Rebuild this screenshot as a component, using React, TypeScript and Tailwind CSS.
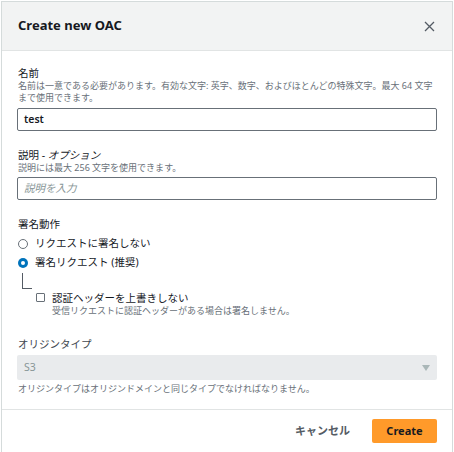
const font = { fontFamily: '"Noto Sans", "Noto Sans CJK JP", sans-serif' };

function Field({ label, desc, children }: { label: React.ReactNode; desc?: string; children: React.ReactNode }) {
  return (
    <div>
      <div className="text-[10.5px] leading-[14px] text-[#16191f] pl-[1px]">{label}</div>
      {desc && <div className="text-[9px] leading-[12px] text-[#687078] pl-[1px]">{desc}</div>}
      {children}
    </div>
  );
}

export default function App() {
  return (
    <div className="w-[454px] h-[452px] bg-white overflow-hidden pt-[1px] pl-[1px]" style={font}>
      <div className="w-[452px] h-[460px] border border-[#d5dbdb] border-b-0 flex flex-col">
        <div className="h-[49px] bg-[#f2f3f3] border-b border-[#e1e4e4] flex items-center justify-between pl-[16px] pr-[17px]">
          <span className="text-[13px] font-bold text-[#16191f]">Create new OAC</span>
          <svg width="11" height="11" viewBox="0 0 11 11" className="text-[#545b64]">
            <path d="M1 1L10 10M10 1L1 10" stroke="currentColor" strokeWidth="1.3" />
          </svg>
        </div>

        <div className="px-[15px] pt-[15px] pb-[14px] border-b border-[#e1e4e4]">
          <Field label="名前" desc="名前は一意である必要があります。有効な文字: 英字、数字、およびほとんどの特殊文字。最大 64 文字まで使用できます。">
            <div className="mt-[4px] h-[23px] border border-[#687078] rounded-[2px] flex items-center px-[6px] text-[10.5px] font-semibold text-[#16191f]">
              test
            </div>
          </Field>

          <div className="mt-[17px]">
            <Field label={<>説明 - <i>オプション</i></>} desc="説明には最大 256 文字を使用できます。">
              <div className="mt-[3px] h-[23px] border border-[#687078] rounded-[2px] flex items-center px-[6px] text-[10.5px] italic text-[#879596]">
                説明を入力
              </div>
            </Field>
          </div>

          <div className="mt-[17px]">
            <div className="text-[10.5px] leading-[14px] text-[#16191f] pl-[1px]">署名動作</div>
            <div className="mt-[6px] flex items-center gap-[7px] h-[14px] pl-[1px]">
              <span className="w-[10px] h-[10px] rounded-full border-[1.5px] border-[#687078] bg-white" />
              <span className="text-[10.5px] text-[#16191f]">リクエストに署名しない</span>
            </div>
            <div className="mt-[5px] flex items-center gap-[7px] h-[14px] pl-[1px]">
              <span className="w-[10px] h-[10px] rounded-full bg-[#0073bb] flex items-center justify-center">
                <span className="w-[4px] h-[4px] rounded-full bg-white" />
              </span>
              <span className="text-[10.5px] text-[#16191f]">署名リクエスト (推奨)</span>
            </div>
            <div className="ml-[5px] mt-[3px] w-[10px] h-[16px] border-l border-b border-[#545b64]" />
            <div className="flex gap-[7px] pl-[19px] mt-[2px]">
              <span className="mt-[2px] w-[9px] h-[9px] border border-[#687078] rounded-[1px] bg-white shrink-0" />
              <div>
                <div className="text-[10.5px] leading-[14px] text-[#16191f]">認証ヘッダーを上書きしない</div>
                <div className="text-[9px] leading-[12px] text-[#687078]">受信リクエストに認証ヘッダーがある場合は署名しません。</div>
              </div>
            </div>
          </div>

          <div className="mt-[20px]">
            <div className="text-[10.5px] leading-[14px] text-[#414750] pl-[1px]">オリジンタイプ</div>
            <div className="mt-[4px] h-[25px] bg-[#e9ebed] rounded-[2px] flex items-center justify-between px-[7px]">
              <span className="text-[10.5px] text-[#879596]">S3</span>
              <svg width="8" height="6" viewBox="0 0 8 6">
                <path d="M0 0H8L4 6Z" fill="#aab7b8" />
              </svg>
            </div>
            <div className="mt-[3px] text-[9px] leading-[12px] text-[#687078] pl-[1px]">
              オリジンタイプはオリジンドメインと同じタイプでなければなりません。
            </div>
          </div>
        </div>

        <div className="flex items-center justify-end gap-[22px] px-[15px] pt-[9px]">
          <span className="text-[11px] font-bold text-[#545b64]">キャンセル</span>
          <div className="w-[65px] h-[24px] bg-[#ff9a2a] rounded-[2px] flex items-center justify-center text-[11px] font-bold text-[#16191f]">
            Create
          </div>
        </div>
      </div>
    </div>
  );
}
